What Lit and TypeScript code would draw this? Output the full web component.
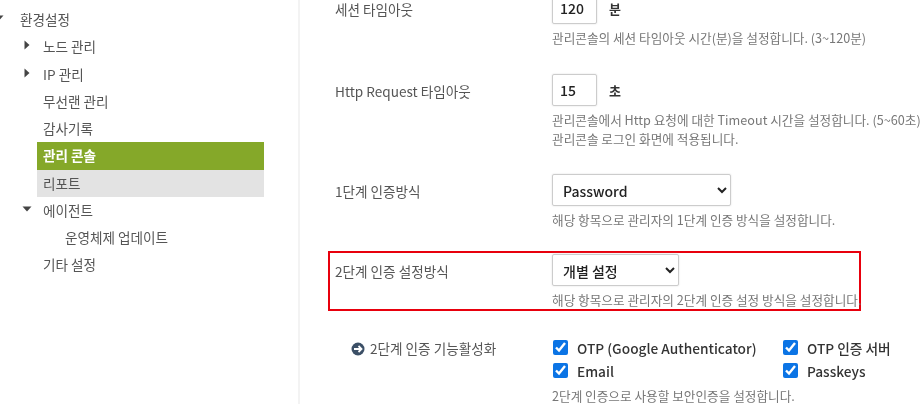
import { LitElement, html, css, svg } from "lit";
import { customElement } from "lit/decorators.js";

const tri = (dir: string) => html`<svg class="tri" width="10" height="10" viewBox="0 0 10 10">${
  dir === "down" ? svg`<path d="M0.5 2.5H9.5L5 7.5Z" fill="#444"/>` : svg`<path d="M2.5 0.5V9.5L7.5 5Z" fill="#444"/>`
}</svg>`;

@customElement("app-root")
export class AppRoot extends LitElement {
  static styles = css`
    :host { display: block; width: 924px; height: 404px; overflow: hidden; background: #fff;
      font-family: "Noto Sans CJK KR", "Noto Sans", sans-serif; font-size: 13.6px; color: #555; }
    .page { display: flex; height: 404px; filter: blur(0.35px); }
    .side { width: 300px; box-sizing: border-box; border-right: 2px solid #f3f3f3; padding-top: 6px; flex: none; }
    .item { height: 27.25px; line-height: 27px; display: flex; align-items: center; width: 227px; margin-left: 37px; padding-left: 6px; box-sizing: border-box; position: relative; white-space: nowrap; }
    .tri { position: absolute; left: -15px; top: 7px; }
    .root { margin-left: 14px; padding-left: 6px; }
    .root .tri { left: -20px; }
    .sub { padding-left: 28px; }
    .active { background: #85a829; color: #fff; font-weight: 700; }
    .gray { background: #e3e3e3; }
    .main { flex: 1; padding: 0 0 0 35px; margin-top: -8px; }
    .row { display: grid; grid-template-columns: 217px 1fr; white-space: nowrap; }
    .row1 { height: 82px; }
    .row2 { height: 100px; }
    .row3 { height: 77px; }
    .row4 { margin-left: -7px; width: 533px; height: 60px; box-sizing: border-box; border: 2px solid #e8000d; padding: 1px 0 0 5px; grid-template-columns: 217px 1fr; margin-bottom: 26px; }
    .label { line-height: 34px; height: 32px; }
    .ctrl { display: flex; align-items: center; gap: 12px; height: 32px; color: #333; font-weight: 700; font-size: 13px; }
    input[type="text"] { width: 45px; height: 32px; box-sizing: border-box; border: 1px solid #ccc; border-radius: 2px; padding: 0 7px; font: inherit; font-size: 14px; font-weight: 500; color: #222; outline: none; box-shadow: 0 0 2px #ddd; }
    select { height: 32px; box-sizing: border-box; border: 1px solid #ccc; border-radius: 2px; padding: 1px 6px 0; font: inherit; font-size: 14px; font-weight: 500; color: #222; background: #fff; box-shadow: 0 0 2px #ddd; }
    .s1 { width: 179px; }
    .s2 { width: 127px; }
    .hint { font-size: 12.65px; color: #777; line-height: 19px; margin-top: 4px; }
    .row4 .hint { margin-top: 5px; line-height: 18px; }
    .sublabel { display: flex; align-items: center; gap: 5px; padding-left: 16px; height: 23px; line-height: 23px; }
    .sublabel svg { flex: none; }
    .checks { display: grid; grid-template-columns: 230px auto; grid-auto-rows: 23px; color: #333; font-weight: 500; margin-top: -1px; padding-left: 1px; font-size: 13.7px; }
    .checks label { display: flex; align-items: center; gap: 9px; }
    .checks input { width: 15px; height: 15px; margin: 0 0 0 0; accent-color: #0b74e5; }
    .row5 .hint { margin-top: 6px; line-height: 15px; }
  `;

  render() {
    return html`<div class="page">
      <nav class="side">
        <div class="item root">${tri("down")}환경설정</div>
        <div class="item">${tri("right")}노드 관리</div>
        <div class="item">${tri("right")}IP 관리</div>
        <div class="item">무선랜 관리</div>
        <div class="item">감사기록</div>
        <div class="item active">관리 콘솔</div>
        <div class="item gray">리포트</div>
        <div class="item">${tri("down")}에이전트</div>
        <div class="item sub">운영체제 업데이트</div>
        <div class="item">기타 설정</div>
      </nav>
      <main class="main">
        <div class="row row1">
          <div class="label">세션 타임아웃</div>
          <div>
            <div class="ctrl"><input type="text" .value=${"120"} /><span>분</span></div>
            <div class="hint">관리콘솔의 세션 타임아웃 시간(분)을 설정합니다. (3~120분)</div>
          </div>
        </div>
        <div class="row row2">
          <div class="label">Http Request 타임아웃</div>
          <div>
            <div class="ctrl"><input type="text" .value=${"15"} /><span>초</span></div>
            <div class="hint">관리콘솔에서 Http 요청에 대한 Timeout 시간을 설정합니다. (5~60초)<br />관리콘솔 로그인 화면에 적용됩니다.</div>
          </div>
        </div>
        <div class="row row3">
          <div class="label">1단계 인증방식</div>
          <div>
            <select class="s1"><option>Password</option></select>
            <div class="hint">해당 항목으로 관리자의 1단계 인증 방식을 설정합니다.</div>
          </div>
        </div>
        <div class="row row4">
          <div class="label">2단계 인증 설정방식</div>
          <div>
            <select class="s2"><option>개별 설정</option></select>
            <div class="hint">해당 항목으로 관리자의 2단계 인증 설정 방식을 설정합니다.</div>
          </div>
        </div>
        <div class="row row5">
          <div class="sublabel">
            <svg width="14" height="14" viewBox="0 0 14 14"><circle cx="7" cy="7" r="6.5" fill="#3b4f66"/><path d="M3 7H10M7.5 4L10.5 7L7.5 10" fill="none" stroke="#fff" stroke-width="1.8"/></svg>
            2단계 인증 기능활성화
          </div>
          <div>
            <div class="checks">
              <label><input type="checkbox" checked />OTP (Google Authenticator)</label>
              <label><input type="checkbox" checked />OTP 인증 서버</label>
              <label><input type="checkbox" checked />Email</label>
              <label><input type="checkbox" checked />Passkeys</label>
            </div>
            <div class="hint">2단계 인증으로 사용할 보안인증을 설정합니다.</div>
          </div>
        </div>
      </main>
    </div>`;
  }
}
